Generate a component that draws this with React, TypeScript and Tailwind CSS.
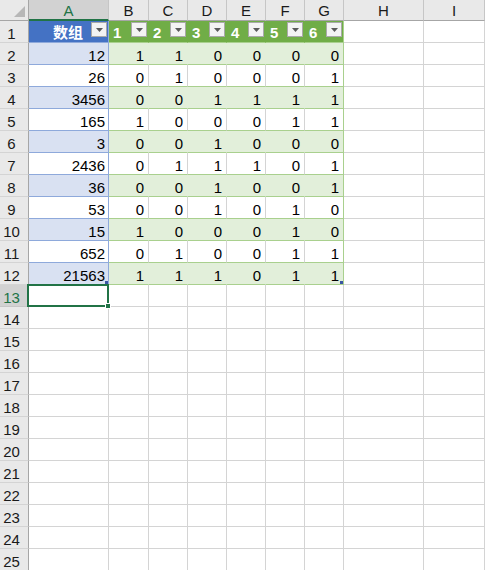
import React from 'react';

const letters = ['A', 'B', 'C', 'D', 'E', 'F', 'G', 'H', 'I'];

const rows: Array<[number, number[]]> = [
  [12, [1, 1, 0, 0, 0, 0]],
  [26, [0, 1, 0, 0, 0, 1]],
  [3456, [0, 0, 1, 1, 1, 1]],
  [165, [1, 0, 0, 0, 1, 1]],
  [3, [0, 0, 1, 0, 0, 0]],
  [2436, [0, 1, 1, 1, 0, 1]],
  [36, [0, 0, 1, 0, 0, 1]],
  [53, [0, 0, 1, 0, 1, 0]],
  [15, [1, 0, 0, 0, 1, 0]],
  [652, [0, 1, 0, 0, 1, 1]],
  [21563, [1, 1, 1, 0, 1, 1]],
];

const FilterButton = () => (
  <div className="w-[16px] h-[15px] mt-[1px] mr-[1px] shrink-0 bg-[#f3f3f3] border border-[#a9a9a9] flex items-center justify-center">
    <svg width="7" height="4" viewBox="0 0 7 4">
      <polygon points="0,0 7,0 3.5,4" fill="#5a5a5a" />
    </svg>
  </div>
);

const RowHeader = ({ n, selected }: { n: number; selected?: boolean }) => (
  <div
    className={
      selected
        ? 'h-[22px] border-r border-b border-r-[#217346] border-b-[#c6c6c6] bg-[#d2d2d2] text-[#217346] pr-[5px] pt-[4px] leading-[17px] text-center'
        : 'h-[22px] border-r border-b border-r-[#a6a6a6] border-b-[#d4d4d4] bg-[#e9e9e9] text-[#1a1a1a] pr-[5px] pt-[4px] leading-[17px] text-center'
    }
  >
    {n}
  </div>
);

const Blank = () => <div className="h-[22px] border-r border-b border-[#d4d4d4] bg-white" />;

export default function App() {
  return (
    <div
      className="w-[485px] h-[570px] overflow-hidden bg-white text-[15px] text-black"
      style={{ fontFamily: '"Liberation Sans", "Noto Sans CJK SC", sans-serif' }}
    >
      <div className="grid grid-cols-[29px_80px_40px_39px_39px_39px_39px_39px_80px_1fr]">
        {/* column headers */}
        <div className="h-[21px] border-r border-b border-r-[#a6a6a6] border-b-[#a6a6a6] bg-[#e9e9e9] flex items-end justify-end pr-[3px] pb-[3px]">
          <svg width="11" height="11" viewBox="0 0 11 11">
            <polygon points="11,0 11,11 0,11" fill="#b7b7b7" />
          </svg>
        </div>
        {letters.map((l) =>
          l === 'A' ? (
            <div
              key={l}
              className="h-[21px] border-r border-r-[#c6c6c6] border-b-2 border-b-[#217346] bg-[#d2d2d2] text-[#217346] text-center pt-[2px] leading-[17px]"
            >
              {l}
            </div>
          ) : (
            <div
              key={l}
              className="h-[21px] border-r border-b border-r-[#c6c6c6] border-b-[#a6a6a6] bg-[#e9e9e9] text-[#1a1a1a] text-center pt-[2px] leading-[17px]"
            >
              {l}
            </div>
          )
        )}

        {/* row 1: table headers */}
        <RowHeader n={1} />
        <div className="h-[22px] flex border-r border-b border-[#8ea9db] bg-[#4472c4] text-white font-bold">
          <span className="flex-1 text-right pr-[8px] pt-[3px] leading-[17px]">数组</span>
          <FilterButton />
        </div>
        {[1, 2, 3, 4, 5, 6].map((h) => (
          <div
            key={h}
            className={
              h === 6
                ? 'h-[22px] flex border-r border-b border-[#a9d08e] bg-[#70ad47] text-white font-bold'
                : 'h-[22px] flex border-r border-b border-r-[#70ad47] border-b-[#a9d08e] bg-[#70ad47] text-white font-bold'
            }
          >
            <span className="flex-1 text-left pl-[4px] pt-[3px] leading-[17px]">{h}</span>
            <FilterButton />
          </div>
        ))}
        <Blank />
        <Blank />

        {/* rows 2-12: data */}
        {rows.map(([a, bits], i) => {
          const banded = i % 2 === 0;
          const last = i === rows.length - 1;
          return (
            <React.Fragment key={i}>
              <RowHeader n={i + 2} />
              <div
                className={
                  banded
                    ? 'relative h-[22px] border-r border-b border-[#8ea9db] bg-[#d9e1f2] text-right pr-[3px] pt-[4px] leading-[17px]'
                    : 'relative h-[22px] border-r border-b border-[#8ea9db] bg-white text-right pr-[3px] pt-[4px] leading-[17px]'
                }
              >
                {a}
                {last && <div className="absolute right-0 bottom-0 w-[3px] h-[3px] bg-[#3a55a4]" />}
              </div>
              {bits.map((b, j) => (
                <div
                  key={j}
                  className={
                    j === 5
                      ? banded
                        ? 'relative h-[22px] border-r border-b border-[#a9d08e] bg-[#e2efda] text-right pr-[4px] pt-[4px] leading-[17px]'
                        : 'relative h-[22px] border-r border-b border-[#a9d08e] bg-white text-right pr-[4px] pt-[4px] leading-[17px]'
                      : banded
                        ? 'h-[22px] border-r border-b border-r-[#e2efda] border-b-[#a9d08e] bg-[#e2efda] text-right pr-[4px] pt-[4px] leading-[17px]'
                        : 'h-[22px] border-r border-b border-r-[#d4d4d4] border-b-[#a9d08e] bg-white text-right pr-[4px] pt-[4px] leading-[17px]'
                  }
                >
                  {b}
                  {j === 5 && last && <div className="absolute right-0 bottom-0 w-[3px] h-[3px] bg-[#3a55a4]" />}
                </div>
              ))}
              <Blank />
              <Blank />
            </React.Fragment>
          );
        })}

        {/* rows 13-25: empty */}
        {Array.from({ length: 13 }, (_, k) => k + 13).map((n) => (
          <React.Fragment key={n}>
            <RowHeader n={n} selected={n === 13} />
            {n === 13 ? (
              <div className="relative h-[22px] border-r border-b border-[#d4d4d4] bg-white">
                <div className="absolute -left-[2px] -top-[1px] -right-[1px] -bottom-[1px] border-2 border-[#217346]" />
                <div className="absolute -right-[3px] -bottom-[3px] w-[6px] h-[6px] bg-[#217346] border border-white" />
              </div>
            ) : (
              <Blank />
            )}
            <Blank />
            <Blank />
            <Blank />
            <Blank />
            <Blank />
            <Blank />
            <Blank />
            <Blank />
          </React.Fragment>
        ))}
      </div>
    </div>
  );
}
